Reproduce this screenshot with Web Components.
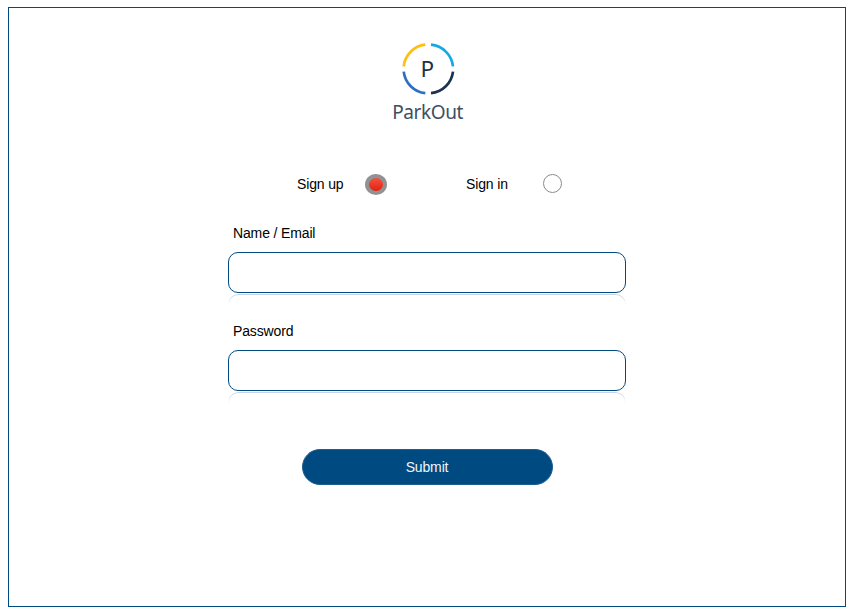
<!DOCTYPE html>
<html lang="en">
<head>
<meta charset="utf-8">
<title>ParkOut</title>
<style>
html, body { margin: 0; background: #fff; }
body { padding: 7px 8px 0; font: 14px/16px "Liberation Sans", sans-serif; letter-spacing: -0.14px; color: #000; }
</style>
</head>
<body>
<sign-page></sign-page>
<script>
class BaseElement extends HTMLElement {
  constructor() {
    super();
    this.attachShadow({ mode: 'open' }).innerHTML = this.constructor.markup;
  }
}

class ParkLogo extends BaseElement {
  static markup = `
    <style>:host { display: block; width: 80px; height: 90px; letter-spacing: 0; } svg { display: block; }</style>
    <svg width="80" height="90" viewBox="0 0 80 90" fill="none" stroke-width="2.7">
      <path d="M15.7 28.3A24.5 24.5 0 0 1 37.3 6.7" stroke="#fcbf12"/>
      <path d="M43 6.7A24.5 24.5 0 0 1 65 28.3" stroke="#14a9e2"/>
      <path d="M15.7 33.6A24.5 24.5 0 0 0 37.3 55.2" stroke="#2e70c0"/>
      <path d="M65 33.6A24.5 24.5 0 0 1 43 55.2" stroke="#1c3450"/>
      <g font-family="'Noto Sans', 'Open Sans', sans-serif" stroke="none">
        <text x="32.5" y="38.5" font-size="22.5" fill="#1d3248">P</text>
        <text x="4.3" y="81" font-size="19" textLength="71" fill="#3d4f63">ParkOut</text>
      </g>
    </svg>`;
}
customElements.define('park-logo', ParkLogo);

class ChoiceItem extends BaseElement {
  static markup = `
    <style>
      :host { display: flex; align-items: center; justify-content: space-between; height: 22px; }
      i { box-sizing: border-box; width: 19px; height: 19px; border: 1px solid #8c8c8c; border-radius: 50%; margin: 0 1px 1px 0; background: #fff; }
      :host([checked]) i { width: 22px; height: 21px; margin: 1px 0 0; border: 4px solid #929292; background: linear-gradient(#ff5d50, #d91500) border-box; }
    </style>
    <span><slot></slot></span><i></i>`;
}
customElements.define('choice-item', ChoiceItem);

class FormField extends BaseElement {
  static markup = `
    <style>
      :host { display: block; height: 98px; }
      .label { padding-left: 5px; height: 27px; }
      .box, .echo { box-sizing: border-box; border: 1px solid #004a82; border-radius: 10px; }
      .box { height: 41px; background: #fff; border-width: 1.2px; }
      .echo { height: 16px; margin-top: 1px; border-color: #c5d2e3; border-bottom: 0;
        border-radius: 10px 10px 0 0; -webkit-mask-image: linear-gradient(#000, transparent 75%); mask-image: linear-gradient(#000, transparent 75%); }
    </style>
    <div class="label"><slot></slot></div><div class="box"></div><div class="echo"></div>`;
}
customElements.define('form-field', FormField);

class SubmitButton extends BaseElement {
  static markup = `
    <style>
      :host { display: flex; align-items: center; justify-content: center; box-sizing: border-box;
        width: 251px; height: 36px; border-radius: 18px; background: #004a82; color: #f1f5f8; border: 1px solid #1d5e91; padding-right: 1px; }
    </style>
    <span><slot></slot></span>`;
}
customElements.define('submit-button', SubmitButton);

class SignPage extends BaseElement {
  static markup = `
    <style>
      :host { display: flex; flex-direction: column; align-items: flex-start; box-sizing: border-box;
        width: 838px; height: 600px; border: 1px solid #004a82; padding-top: 30px; }
      park-logo { margin-left: 379px; }
      .choices { display: flex; gap: 79px; margin: 45px 0 0 288px; }
      choice-item:first-child { width: 90px; }
      choice-item:last-child { width: 97px; }
      form { display: block; width: 398px; margin: 30px 0 0 219px; }
      submit-button { margin: 28px 0 0 293px; }
    </style>
    <park-logo></park-logo>
    <div class="choices"><choice-item checked>Sign up</choice-item><choice-item>Sign in</choice-item></div>
    <form><form-field>Name / Email</form-field><form-field>Password</form-field></form>
    <submit-button>Submit</submit-button>`;
}
customElements.define('sign-page', SignPage);
</script>
</body>
</html>
